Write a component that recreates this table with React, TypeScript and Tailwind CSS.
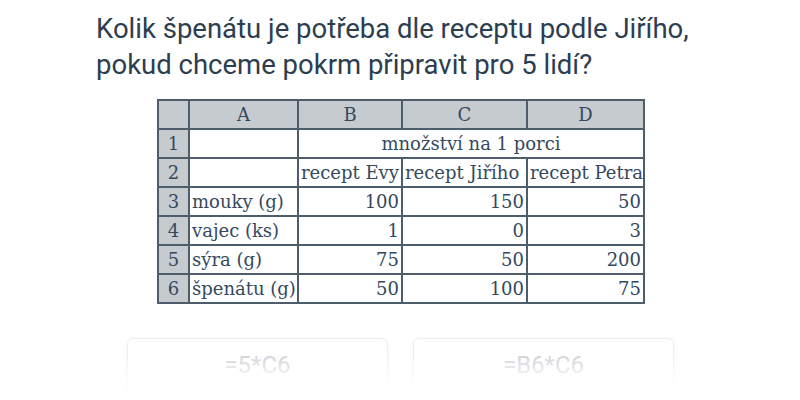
import React from "react";

const rows: [string, string, string, string, string][] = [
  ["3", "mouky (g)", "100", "150", "50"],
  ["4", "vajec (ks)", "1", "0", "3"],
  ["5", "sýra (g)", "75", "50", "200"],
  ["6", "špenátu (g)", "50", "100", "75"],
];

export default function App() {
  const bd = "border-2 border-[#4d5d6c]";
  const hd = `${bd} bg-[#c6cbd0] text-center`;
  const cell = `${bd} bg-white px-[2px]`;
  return (
    <div className="relative w-[800px] h-[400px] overflow-hidden bg-white">
      <div className="pt-[11px] pl-[96px]">
        <h1 className="text-[27.5px] leading-[36px] text-[#2c3e50] font-normal" style={{ fontFamily: "Roboto, sans-serif" }}>
          Kolik špenátu je potřeba dle receptu podle Jiřího,
          <br />
          pokud chceme pokrm připravit pro 5 lidí?
        </h1>
      </div>
      <div className="pl-[157px] mt-[16px]">
        <table
          className="table-fixed border-collapse w-[486px] text-[18px] text-[#34495e] leading-none"
          style={{ fontFamily: '"DejaVu Serif", serif' }}
        >
          <colgroup>
            <col className="w-[31px]" />
            <col className="w-[109px]" />
            <col className="w-[104px]" />
            <col className="w-[125px]" />
            <col className="w-[117px]" />
          </colgroup>
          <tbody>
            <tr className="h-[29px]">
              <td className={hd}></td>
              <td className={hd}>A</td>
              <td className={hd}>B</td>
              <td className={hd}>C</td>
              <td className={hd}>D</td>
            </tr>
            <tr className="h-[29px]">
              <td className={hd}>1</td>
              <td className={cell}></td>
              <td className={`${cell} text-center`} colSpan={3}>množství na 1 porci</td>
            </tr>
            <tr className="h-[29px]">
              <td className={hd}>2</td>
              <td className={cell}></td>
              <td className={`${cell} whitespace-nowrap overflow-hidden`}>recept Evy</td>
              <td className={`${cell} whitespace-nowrap overflow-hidden`}>recept Jiřího</td>
              <td className={`${cell} whitespace-nowrap overflow-hidden`}>recept Petra</td>
            </tr>
            {rows.map((r) => (
              <tr key={r[0]} className="h-[29px]">
                <td className={hd}>{r[0]}</td>
                <td className={`${cell} whitespace-nowrap`}>{r[1]}</td>
                <td className={`${cell} text-right`}>{r[2]}</td>
                <td className={`${cell} text-right`}>{r[3]}</td>
                <td className={`${cell} text-right`}>{r[4]}</td>
              </tr>
            ))}
          </tbody>
        </table>
      </div>
      <div className="flex gap-[25px] pl-[127px] mt-[34px]">
        {["=5*C6", "=B6*C6"].map((t) => (
          <div
            key={t}
            className="w-[261px] h-[70px] rounded-[6px] border border-[#eceef0] shadow-[0_1px_4px_rgba(0,0,0,0.06)] flex justify-center pt-[12px] text-[24px] leading-[28px] text-[#cfd3d8]"
            style={{ fontFamily: "Roboto, sans-serif" }}
          >
            {t}
          </div>
        ))}
      </div>
      <div className="absolute left-0 right-0 top-[355px] h-[45px] bg-gradient-to-b from-white/0 via-white/80 to-white" />
    </div>
  );
}
